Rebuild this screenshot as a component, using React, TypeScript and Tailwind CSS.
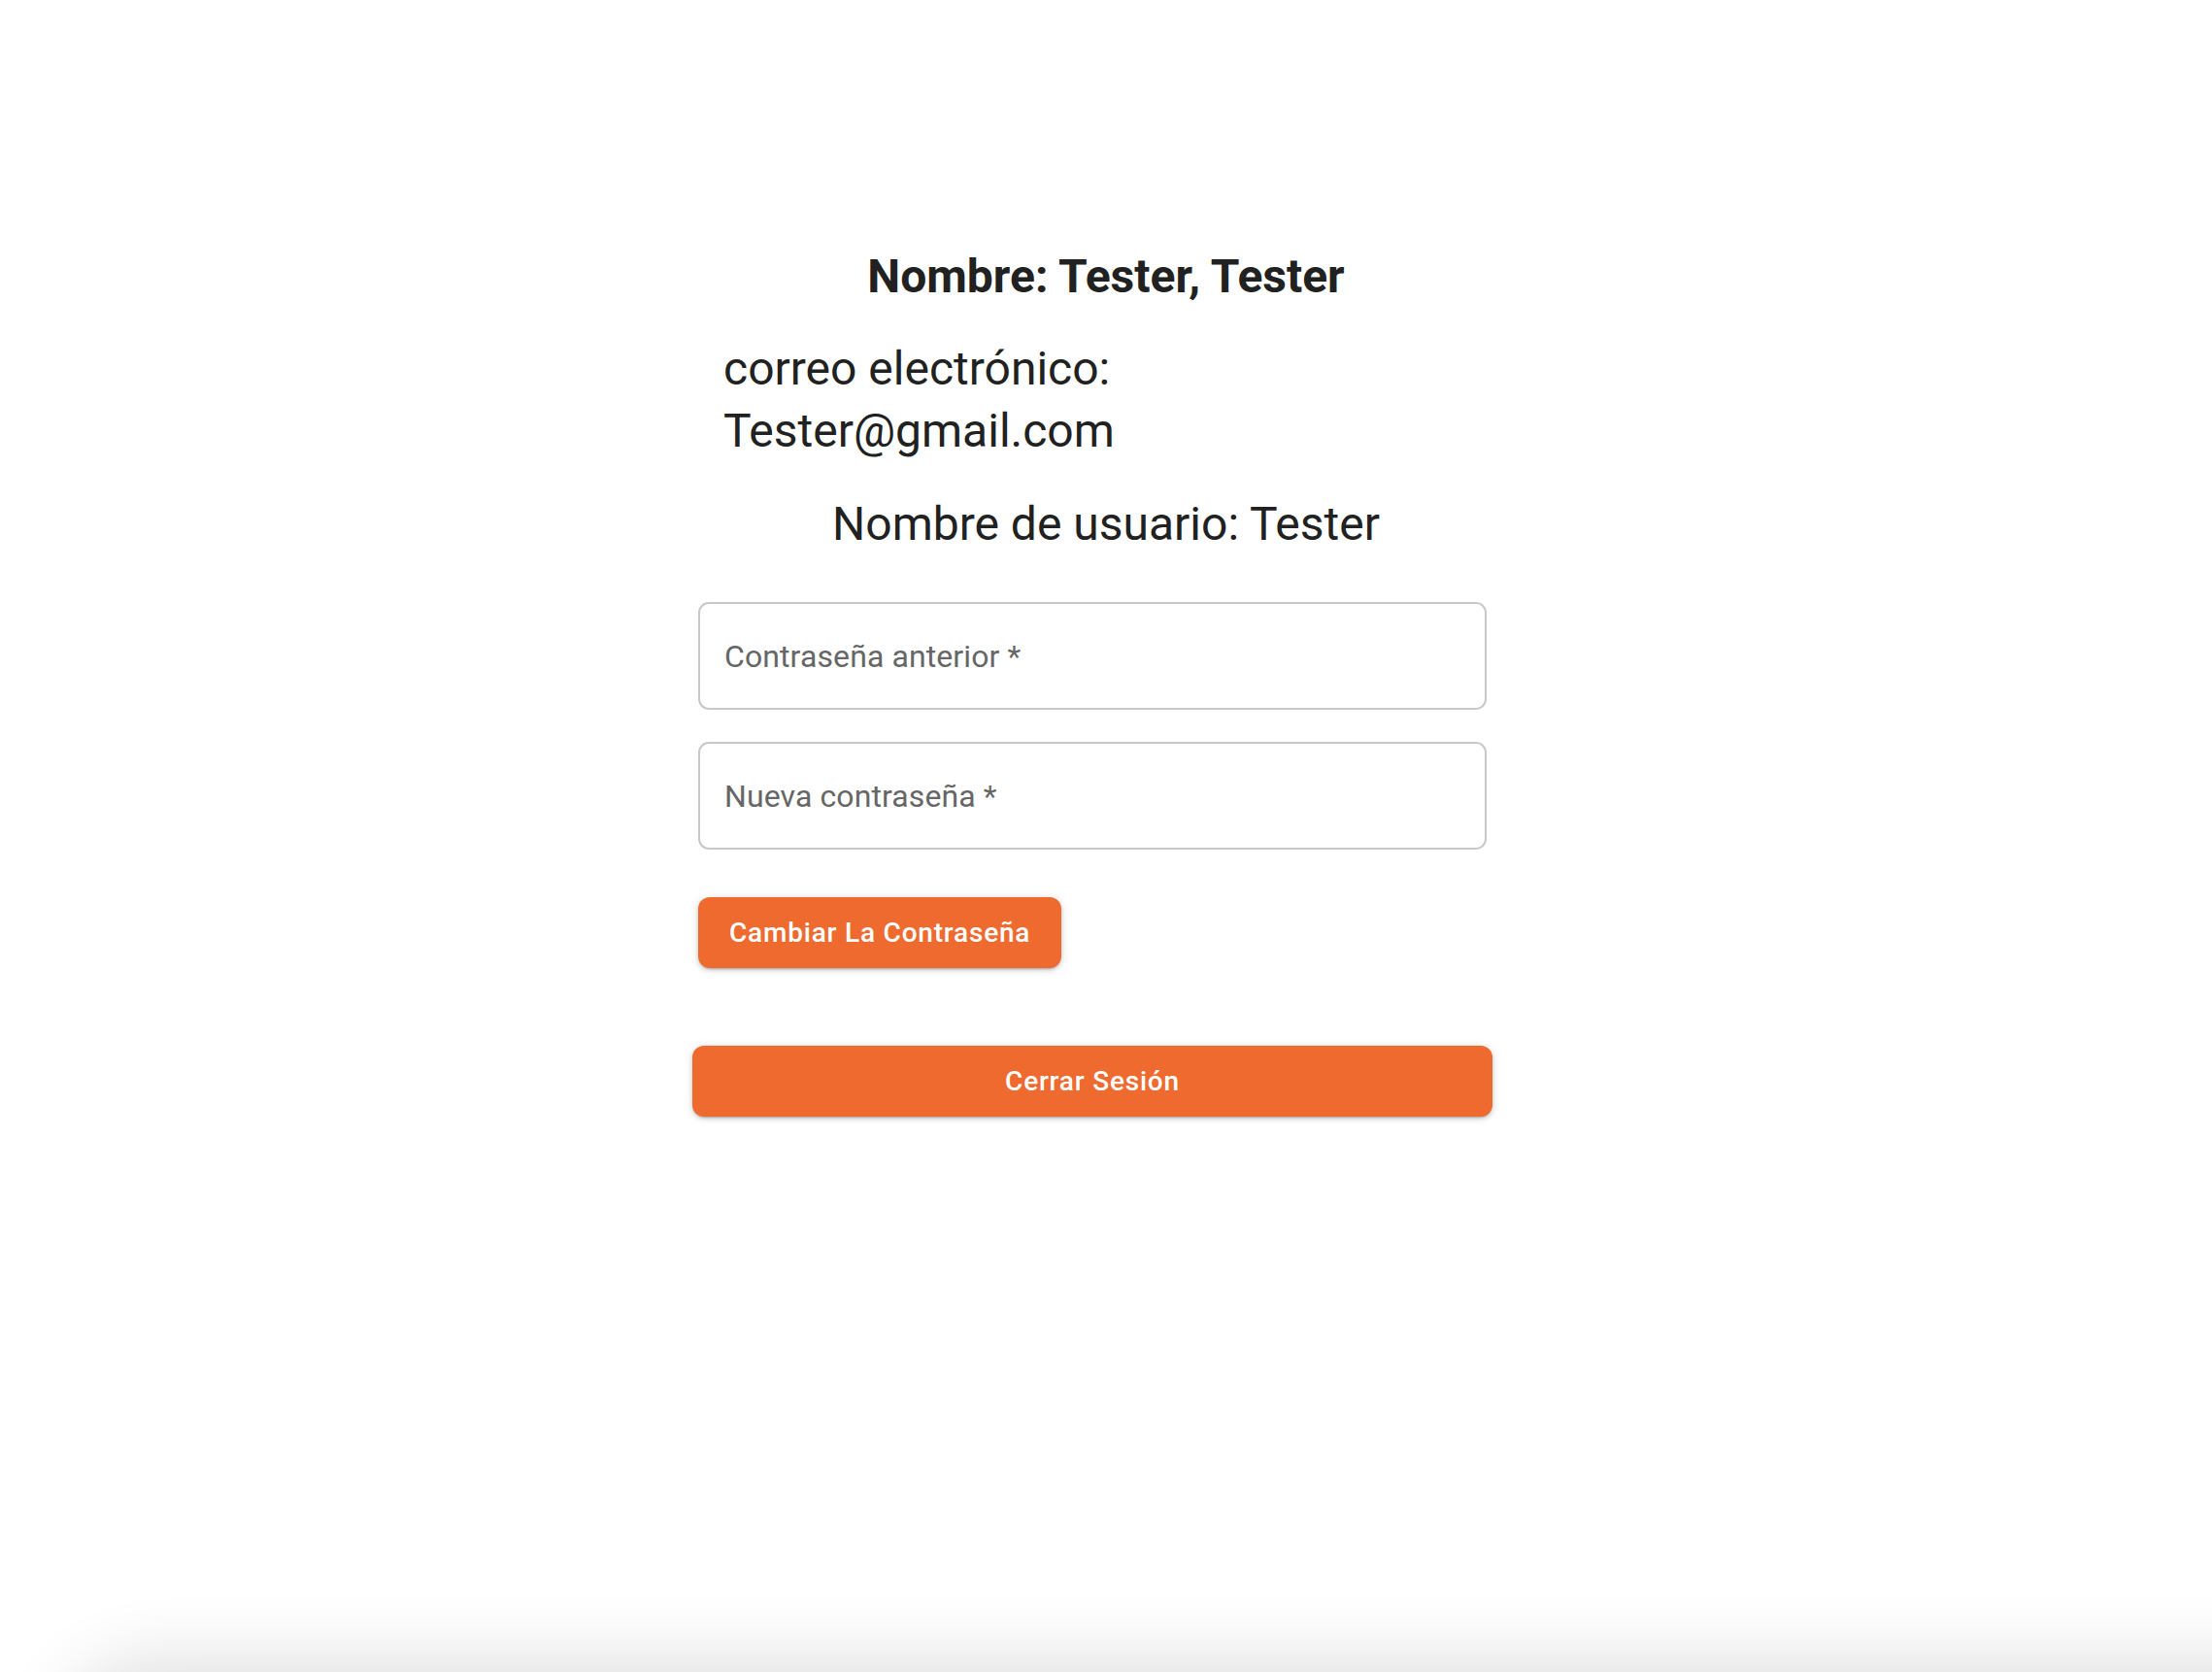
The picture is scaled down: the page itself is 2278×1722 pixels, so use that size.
import React from 'react';

const fields = ['Contraseña anterior *', 'Nueva contraseña *'];

const buttonShadow =
  'shadow-[0_3px_2px_-2px_rgba(0,0,0,0.2),0_2px_4px_0_rgba(0,0,0,0.14),0_1px_10px_0_rgba(0,0,0,0.12)]';

export default function App() {
  return (
    <div className="relative h-[1722px] w-full overflow-hidden bg-white font-['Roboto','Liberation_Sans',sans-serif] text-[#212121]">
      <div className="pt-[256px]">
        <h1 className="text-center text-[48px] font-bold leading-[58px]">Nombre: Tester, Tester</h1>

        <p className="ml-[745px] mt-[34px] w-[790px] text-left text-[48px] leading-[64px]">
          correo electrónico: Tester@gmail.com
        </p>

        <p className="mt-[32px] text-center text-[48px] leading-[64px]">Nombre de usuario: Tester</p>

        <form className="ml-[713px] mt-[48px] flex w-[824px] flex-col" onSubmit={e => e.preventDefault()}>
          {fields.map((label, i) => (
            <label
              key={label}
              className={`mx-[6px] flex h-[111px] items-center rounded-[11px] border-2 border-[#c8c8c8] px-[25px] text-[32px] tracking-[0.1px] text-[#666666] ${
                i > 0 ? 'mt-[33px]' : ''
              }`}
            >
              {label}
            </label>
          ))}

          <div className="mt-[49px] px-[6px]">
            <button
              type="submit"
              className={`h-[73px] rounded-[12px] bg-[#ee6a2f] px-[32px] text-[28px] font-medium tracking-[0.8px] text-white ${buttonShadow}`}
            >
              Cambiar La Contraseña
            </button>
          </div>

          <button
            type="button"
            className={`mt-[80px] h-[73px] w-full rounded-[12px] bg-[#ee6a2f] text-[28px] font-medium tracking-[0.8px] text-white ${buttonShadow}`}
          >
            Cerrar Sesión
          </button>
        </form>
      </div>

      {/* shadow of the bar just below the visible area */}
      <div className="absolute left-[70px] right-[-100px] top-[1722px] h-[200px] rounded-tl-[90px] bg-white shadow-[0_0_70px_15px_rgba(0,0,0,0.12)]" />
    </div>
  );
}
